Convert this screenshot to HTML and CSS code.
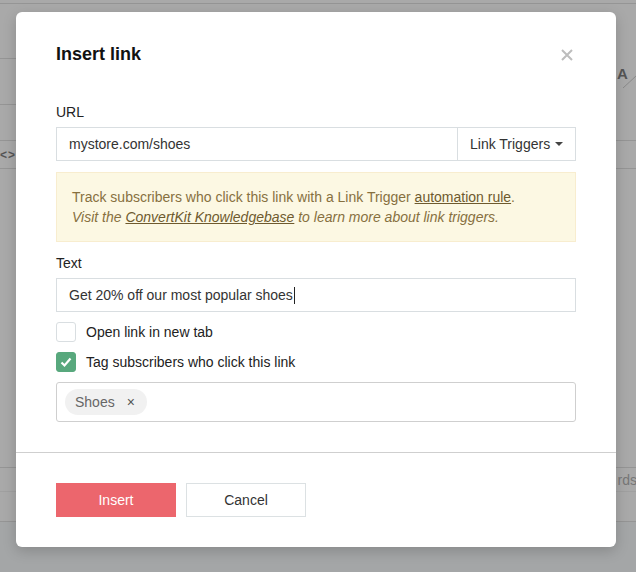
FILE: index.html
```html
<!DOCTYPE html>
<html lang="en">

<head>
    <meta charset="UTF-8">
    <meta name="viewport" content="width=device-width, initial-scale=1.0">
    <title>Insert link</title>
    <link rel="stylesheet" href="styles.css">
</head>

<body>

    <div class="page">
        <div class="row row-top"></div>
        <div class="row row-a"><span class="line-left"></span></div>
        <div class="row row-b">
            <span class="line-left"></span>
            <span class="font-a">A</span>
            <svg class="slash" width="14" height="14" viewBox="0 0 14 14"><line x1="1" y1="13" x2="14" y2="1" stroke="#8a8a8a" stroke-width="1" /></svg>
        </div>
        <div class="row row-c"></div>
        <div class="row row-d"><span class="code">&lt;&gt;</span></div>
        <div class="row row-space"></div>
        <div class="row row-e"><span class="words">rds</span></div>
        <div class="row row-f"></div>
        <div class="row row-bottom"></div>
    </div>

    <div class="modal">
        <div class="modal-header">
            <h2>Insert link</h2>
            <span class="modal-close">
                <svg width="12" height="12" viewBox="0 0 12 12"><path d="M1 1 L11 11 M11 1 L1 11" stroke="#bdbdbd" stroke-width="2" /></svg>
            </span>
        </div>

        <div class="modal-body">
            <label class="field-label">URL</label>
            <div class="input-group">
                <div class="input-text">mystore.com/shoes</div>
                <div class="input-addon">Link Triggers <span class="caret"></span></div>
            </div>

            <div class="notice">
                Track subscribers who click this link with a Link Trigger <u>automation rule</u>.<br>
                <em>Visit the <u>ConvertKit Knowledgebase</u> to learn more about link triggers.</em>
            </div>

            <label class="field-label">Text</label>
            <div class="input-text input-single">Get 20% off our most popular shoes<span class="cursor"></span></div>

            <div class="check-row">
                <span class="checkbox"></span>
                <span>Open link in new tab</span>
            </div>
            <div class="check-row">
                <span class="checkbox checked">
                    <svg width="14" height="14" viewBox="0 0 14 14"><path d="M2.5 7.5 L5.5 10.5 L11.5 3.5" fill="none" stroke="#fff" stroke-width="2.2" /></svg>
                </span>
                <span>Tag subscribers who click this link</span>
            </div>

            <div class="tag-box">
                <span class="tag">Shoes <span class="tag-x">&times;</span></span>
            </div>
        </div>

        <div class="modal-footer">
            <button class="btn btn-primary">Insert</button>
            <button class="btn btn-default">Cancel</button>
        </div>
    </div>

</body>

</html>
```

FILE: styles.css
```css
* {
    margin: 0;
    padding: 0;
    box-sizing: border-box;
}

html,
body {
    width: 100%;
    height: 100%;
}

body {
    font-family: "Liberation Sans", Arial, sans-serif;
    font-size: 14px;
    color: #333;
    background: #a9a9a9;
    overflow: hidden;
}

/* page behind the overlay */
.page {
    display: flex;
    flex-direction: column;
    height: 100%;
}

.row {
    display: flex;
    align-items: flex-end;
    position: relative;
    flex-shrink: 0;
}

.row-top {
    height: 4px;
    border-bottom: solid 1px #959595;
}

.row-a {
    height: 55px;
}

.row-b {
    height: 46px;
}

.line-left {
    display: block;
    width: 30px;
    border-bottom: solid 1px #959595;
}

.font-a {
    position: absolute;
    left: 617px;
    top: 6px;
    font-weight: bold;
    font-size: 15px;
    color: #555;
}

.slash {
    position: absolute;
    left: 622px;
    top: 16px;
}

.row-c {
    height: 36px;
    border-bottom: solid 1px #959595;
}

.row-d {
    height: 28px;
    border-bottom: solid 1px #959595;
    align-items: center;
}

.code {
    font-size: 12px;
    font-weight: bold;
    color: #555;
    letter-spacing: 1px;
}

.row-space {
    height: 299px;
    border-bottom: solid 1px #959595;
}

.row-e {
    height: 24px;
    justify-content: flex-end;
    align-items: center;
    border-bottom: solid 1px #a0a0a0;
}

.words {
    font-size: 14px;
    color: #777;
    margin-right: -1px;
}

.row-f {
    height: 30px;
    border-bottom: solid 1px #959595;
}

.row-bottom {
    flex: 1;
    background: #a4a6a7;
}

/* modal */
.modal {
    position: absolute;
    left: 16px;
    top: 12px;
    width: 600px;
    height: 535px;
    background: #fff;
    border-radius: 6px;
    box-shadow: 0 4px 14px rgba(0, 0, 0, 0.18);
    display: flex;
    flex-direction: column;
}

.modal-header {
    display: flex;
    justify-content: space-between;
    align-items: center;
    padding: 32px 43px 0 40px;
}

.modal-header h2 {
    font-size: 18px;
    line-height: 20px;
    font-weight: bold;
    color: #111;
}

.modal-close {
    display: flex;
    margin-top: 2px;
}

.modal-body {
    padding: 38px 40px 30px;
    display: flex;
    flex-direction: column;
    border-bottom: solid 1px #cfcfcf;
}

.field-label {
    display: block;
    line-height: 20px;
    color: #222;
    margin-bottom: 5px;
}

.input-group {
    display: flex;
    height: 34px;
    border: solid 1px #d9dee1;
}

.input-text {
    flex: 1;
    display: flex;
    align-items: center;
    padding: 0 12px;
    color: #333;
}

.input-single {
    flex: none;
    height: 34px;
    border: solid 1px #d9dee1;
}

.cursor {
    display: inline-block;
    width: 1px;
    height: 17px;
    background: #222;
    margin-left: 1px;
}

.input-addon {
    width: 118px;
    display: flex;
    align-items: center;
    padding-left: 12px;
    border-left: solid 1px #d9dee1;
    color: #333;
}

.caret {
    display: inline-block;
    margin-left: 5px;
    border-left: 4px solid transparent;
    border-right: 4px solid transparent;
    border-top: 4px solid #444;
}

.notice {
    margin: 11px 0 11px;
    padding: 14px 15px;
    background: #fcf8e3;
    border: solid 1px #f8edcf;
    color: #87703f;
    line-height: 20px;
}

.notice u {
    color: #6e5a2e;
}

.check-row {
    display: flex;
    align-items: center;
    gap: 10px;
    margin-top: 10px;
    height: 20px;
    color: #222;
}

.checkbox {
    width: 20px;
    height: 20px;
    border: solid 1px #d9dee1;
    border-radius: 3px;
    display: flex;
    align-items: center;
    justify-content: center;
}

.checkbox.checked {
    background: #58a87d;
    border-color: #58a87d;
}

.tag-box {
    margin-top: 10px;
    height: 40px;
    border: solid 1px #cfcfcf;
    border-radius: 3px;
    padding: 5px 8px;
    display: flex;
    align-items: center;
}

.tag {
    display: flex;
    align-items: center;
    height: 26px;
    padding: 0 12px 0 10px;
    background: #f1f1f1;
    border-radius: 13px;
    color: #666;
}

.tag-x {
    margin-left: 12px;
    font-size: 14px;
    color: #555;
}

.modal-footer {
    padding: 30px 40px;
    display: flex;
    gap: 10px;
}

.btn {
    width: 120px;
    height: 34px;
    font-family: "Liberation Sans", Arial, sans-serif;
    font-size: 14px;
    cursor: pointer;
}

.btn-primary {
    background: #ec666d;
    border: solid 1px #ec666d;
    color: #fff;
}

.btn-default {
    background: #fff;
    border: solid 1px #dce1e3;
    color: #333;
}
```
